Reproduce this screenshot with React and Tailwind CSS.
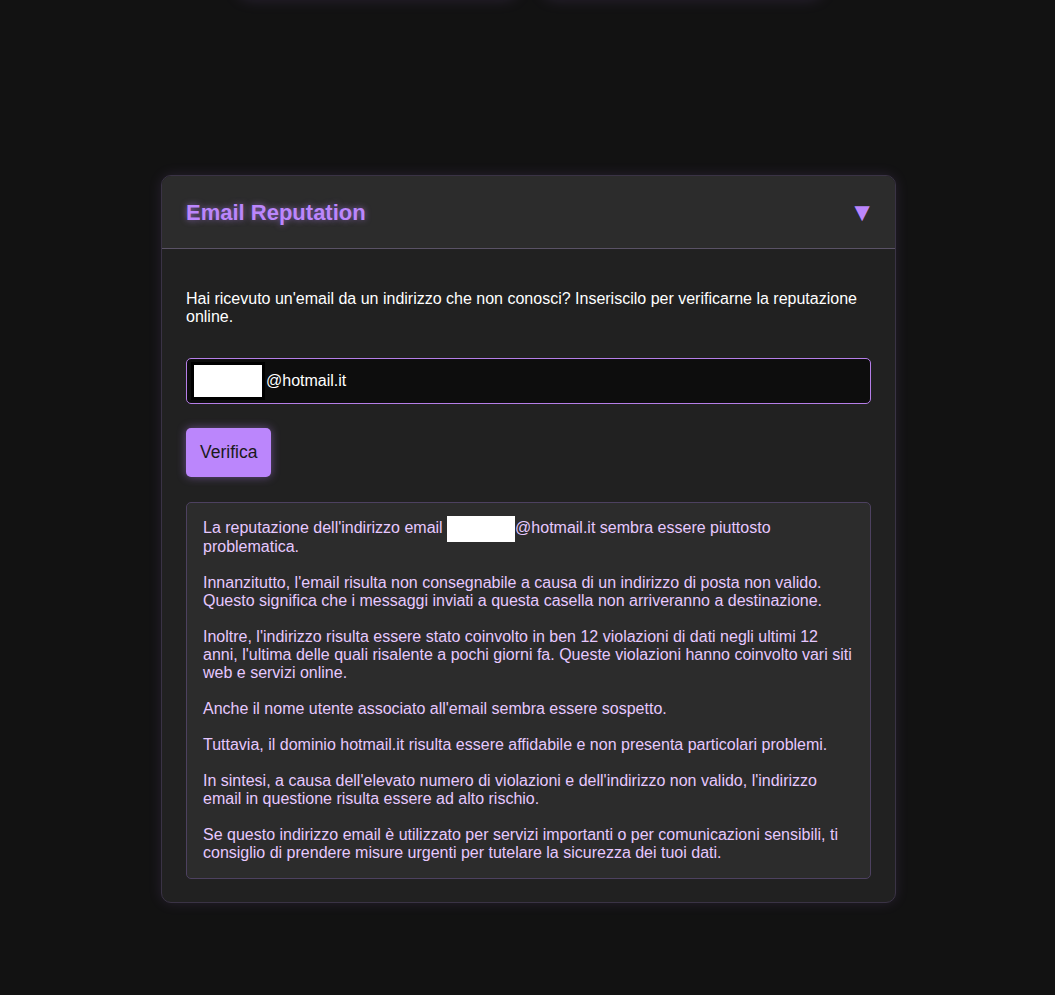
import React from "react";

const Redacted = ({ className }) => (
  <span className={`inline-block bg-white align-middle ${className}`}></span>
);

const App = () => {
  return (
    <div className="min-h-[995px] w-full bg-[#121212] overflow-hidden font-['Liberation_Sans',Arial,sans-serif]">
      {/* tiles scrolled above the fold, only their glow shows */}
      <div className="flex justify-center gap-[30px] -mt-[54px] pl-[5px]">
        <div className="w-[275px] h-[50px] rounded-lg bg-[#1e1e1e] shadow-[0_0_18px_rgba(187,134,252,0.22)]"></div>
        <div className="w-[275px] h-[50px] rounded-lg bg-[#1e1e1e] shadow-[0_0_18px_rgba(187,134,252,0.22)]"></div>
      </div>

      <div className="mx-auto mt-[179px] w-[735px] translate-x-[1px] rounded-[10px] border border-[#3a3345] bg-[#212121] shadow-[0_0_14px_rgba(187,134,252,0.12)] overflow-hidden">
        {/* header */}
        <div className="flex items-center justify-between bg-[#2c2c2c] border-b border-[#5a5266] pl-6 pr-[20px] h-[73px]">
          <h2 className="text-[22px] font-bold text-[#bb86fc] [text-shadow:0_0_6px_rgba(187,134,252,0.6)]">
            Email Reputation
          </h2>
          <span className="text-[#bb86fc] text-[26px] leading-none">▼</span>
        </div>

        {/* body */}
        <div className="px-6 pt-[41px] pb-[23px]">
          <p className="text-white text-[16px] leading-[18px]">
            Hai ricevuto un'email da un indirizzo che non conosci? Inseriscilo per verificarne la reputazione online.
          </p>

          <div className="mt-[32px] flex items-center h-[46px] rounded-[5px] border border-[#b57ee8] bg-[#0d0d0d] pl-[4px]">
            <span className="flex items-center bg-black p-[3px]">
              <Redacted className="w-[68px] h-[32px]" />
            </span>
            <span className="text-white text-[16px] ml-[1px]">@hotmail.it</span>
          </div>

          <button className="mt-[24px] h-[49px] px-[14px] rounded-[5px] bg-[#bb86fc] text-[#1a1a1a] text-[17.5px] shadow-[0_0_10px_rgba(187,134,252,0.45)]">
            Verifica
          </button>

          <div className="mt-[25px] rounded-[5px] border border-[#4d4160] bg-[#2c2c2c] p-4 text-[16px] leading-[18px] text-[#e6c8ff]">
            <p>
              La reputazione dell'indirizzo email{" "}
              <Redacted className="w-[68px] h-[26px] -my-[4px]" />@hotmail.it sembra essere piuttosto problematica.
            </p>
            <p className="mt-[18px]">
              Innanzitutto, l'email risulta non consegnabile a causa di un indirizzo di posta non valido. Questo significa che i messaggi inviati a questa casella non arriveranno a destinazione.
            </p>
            <p className="mt-[18px]">
              Inoltre, l'indirizzo risulta essere stato coinvolto in ben 12 violazioni di dati negli ultimi 12 anni, l'ultima delle quali risalente a pochi giorni fa. Queste violazioni hanno coinvolto vari siti web e servizi online.
            </p>
            <p className="mt-[18px]">
              Anche il nome utente associato all'email sembra essere sospetto.
            </p>
            <p className="mt-[18px]">
              Tuttavia, il dominio hotmail.it risulta essere affidabile e non presenta particolari problemi.
            </p>
            <p className="mt-[18px]">
              In sintesi, a causa dell'elevato numero di violazioni e dell'indirizzo non valido, l'indirizzo email in questione risulta essere ad alto rischio.
            </p>
            <p className="mt-[18px]">
              Se questo indirizzo email è utilizzato per servizi importanti o per comunicazioni sensibili, ti consiglio di prendere misure urgenti per tutelare la sicurezza dei tuoi dati.
            </p>
          </div>
        </div>
      </div>
    </div>
  );
};

export default App;
